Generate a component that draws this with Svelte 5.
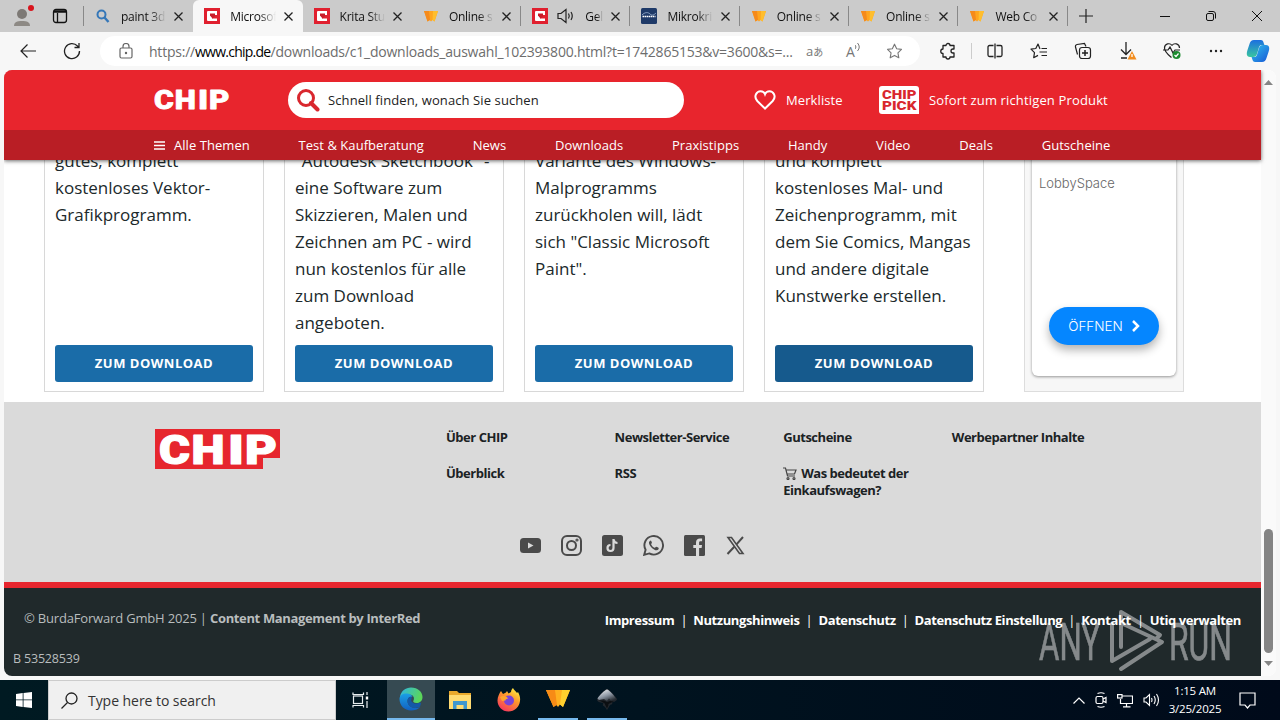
<script>
    const tabs = [
        { title: 'paint 3d', icon: 'search' },
        { title: 'Microsof', icon: 'chip', active: true },
        { title: 'Krita Stu', icon: 'chip', near: true },
        { title: 'Online s', icon: 'w' },
        { title: 'Gel', icon: 'chip', sound: true },
        { title: 'Mikrokri', icon: 'blue' },
        { title: 'Online s', icon: 'w' },
        { title: 'Online s', icon: 'w' },
        { title: 'Web Co', icon: 'w' }
    ];

    const nav = ['Test & Kaufberatung', 'News', 'Downloads', 'Praxistipps', 'Handy', 'Video', 'Deals', 'Gutscheine'];

    const cards = [
        { lines: ['gutes, komplett', 'kostenloses Vektor-', 'Grafikprogramm.'] },
        {
            lines: [
                '"Autodesk Sketchbook" -',
                'eine Software zum',
                'Skizzieren, Malen und',
                'Zeichnen am PC - wird',
                'nun kostenlos für alle',
                'zum Download',
                'angeboten.'
            ]
        },
        {
            lines: [
                'Variante des Windows-',
                'Malprogramms',
                'zurückholen will, lädt',
                'sich "Classic Microsoft',
                'Paint".'
            ]
        },
        {
            lines: [
                'und komplett',
                'kostenloses Mal- und',
                'Zeichenprogramm, mit',
                'dem Sie Comics, Mangas',
                'und andere digitale',
                'Kunstwerke erstellen.'
            ],
            hover: true
        }
    ];

    const footerCols = [
        ['Über CHIP', 'Überblick'],
        ['Newsletter-Service', 'RSS'],
        ['Gutscheine', 'Was bedeutet der Einkaufswagen?'],
        ['Werbepartner Inhalte']
    ];

    const legal = ['Impressum', 'Nutzungshinweis', 'Datenschutz', 'Datenschutz Einstellung', 'Kontakt', 'Utiq verwalten'];
</script>

{#snippet foxIcon()}
    <svg width="16" height="16" viewBox="0 0 16 16">
        <path d="M1 3h14l-3.500 10.500-2-1.500L8 13.500 6.500 12 4.500 13.500z" fill="#ffa51f" />
        <path d="M1 3h5l1 9-2.500 1.500z" fill="#f58a1c" />
        <path d="M10 3h5l-3.500 10.500-2-1.500z" fill="#ffbe2e" />
    </svg>
{/snippet}

<!-- each letter is stretched to its own box of the wordmark -->
{#snippet letters(y)}
    <text x="0" {y} textLength="31" lengthAdjust="spacingAndGlyphs">C</text>
    <text x="32.500" {y} textLength="33" lengthAdjust="spacingAndGlyphs">H</text>
    <text x="69" {y} textLength="16" lengthAdjust="spacingAndGlyphs">I</text>
    <text x="86" {y} textLength="32" lengthAdjust="spacingAndGlyphs">P</text>
{/snippet}

<div class="screen">
    <div class="tabbar">
        <div class="left-tools">
            <svg width="22" height="22" viewBox="0 0 22 22">
                <circle cx="10" cy="9" r="5" fill="#7d7975" />
                <path d="M2 21c0-4 3-5 8-5s8 1 8 5z" fill="#8d8984" />
                <circle cx="19" cy="3" r="3" fill="#d8141c" />
            </svg>
            <svg class="workspace" width="16" height="16" viewBox="0 0 16 16" fill="none" stroke="#111" stroke-width="1.300">
                <rect x="1.500" y="1.500" width="13" height="13" rx="2.500" />
                <path d="M2 3.500h12" stroke-width="2.500" /><path d="M5.500 5v9" />
            </svg>
        </div>
        {#each tabs as tab}
            <div class="tab" class:active={tab.active} class:near={tab.near}>
                {#if tab.icon === 'search'}
                    <svg width="16" height="16" viewBox="0 0 16 16" fill="none" stroke="#3577b8" stroke-width="2">
                        <circle cx="6.500" cy="6.500" r="4" /><path d="M9.500 9.500l4 4.500" stroke-width="2.400" />
                    </svg>
                {:else if tab.icon === 'chip'}
                    <svg width="16" height="16" viewBox="0 0 16 16">
                        <rect width="16" height="16" fill="#e0202f" />
                        <path d="M3 4q0-1 1-1h9v4h-2V6H6v1.500l2 1.500v1.500h5V13H4q-1 0-1-1z" fill="#fff" />
                        <path d="M6 5.500h5V8L8.500 10.500 6 7.500z" fill="#c81a28" />
                    </svg>
                {:else if tab.icon === 'blue'}
                    <svg width="16" height="16" viewBox="0 0 16 16">
                        <rect width="16" height="16" rx="1.500" fill="#1f3a68" />
                        <path d="M1 7c3-3 6-3 8-1s4 1 6-1" stroke="#8ea6c8" fill="none" />
                        <path d="M1.500 8.500h13" stroke="#fff" stroke-width="1.500" stroke-dasharray="1.500 .5" />
                    </svg>
                {:else}
                    {@render foxIcon()}
                {/if}
                {#if tab.sound}
                    <svg class="sound" width="18" height="16" viewBox="0 0 18 16" fill="none" stroke="#222" stroke-width="1.200">
                        <path d="M1 5.500h3L9 1.500v13L4 10.500H1zM11.500 5.500q1.500 2.500 0 5M14 4q2.500 4 0 8" />
                    </svg>
                {/if}
                <span class="title">{tab.title}</span>
                <svg width="9" height="9" viewBox="0 0 9 9" stroke="#222" stroke-width="1.300"><path d="M.5.5l8 8M8.500.5l-8 8" /></svg>
            </div>
        {/each}
        <svg class="plus" width="14" height="14" viewBox="0 0 14 14" stroke="#222" stroke-width="1.200"><path d="M7 0v14M0 7h14" /></svg>
        <div class="window-controls">
            <svg width="10" height="10" viewBox="0 0 10 10" stroke="#111"><path d="M0 5.500h10" /></svg>
            <svg width="10" height="10" viewBox="0 0 10 10" stroke="#111" fill="none">
                <rect x=".5" y="2.500" width="7" height="7" rx="1.500" /><path d="M2.500.5H7a2.500 2.500 0 0 1 2.500 2.500v4.500" />
            </svg>
            <svg width="10" height="10" viewBox="0 0 10 10" stroke="#111"><path d="M0 0l10 10M10 0L0 10" /></svg>
        </div>
    </div>

    <div class="toolbar">
        <svg class="back" width="16" height="14" viewBox="0 0 16 14" fill="none" stroke="#222" stroke-width="1.200"><path d="M16 7H1M7.500.5L1 7l6.500 6.500" /></svg>
        <svg class="reload" width="18" height="18" viewBox="0 0 18 18" fill="none" stroke="#222" stroke-width="1.300">
            <path d="M16.500 9A7.500 7.500 0 1 1 14.500 4L16 5.500M16 1v4.500h-4.500" />
        </svg>
        <div class="address">
            <svg width="14" height="16" viewBox="0 0 14 16" fill="none" stroke="#666" stroke-width="1.200">
                <rect x="1" y="5" width="12" height="10" rx="1.500" /><path d="M4 5V3.500a3 3 0 0 1 6 0V5" /><circle cx="7" cy="10" r=".6" fill="#666" />
            </svg>
            <span class="url">https://<b>www.chip.de</b>/downloads/c1_downloads_auswahl_102393800.html?t=1742865153&v=3600&s=...</span>
            <span class="translate">a<small>あ</small></span>
            <span class="read">A<svg width="6" height="10" viewBox="0 0 6 10" fill="none" stroke="#777"><path d="M0 2q2 2 0 4M2.500 0q3.500 4 0 8" /></svg></span>
            <svg width="17" height="16" viewBox="0 0 20 20" fill="none" stroke="#777" stroke-width="1.400" stroke-linejoin="round">
                <path d="M10 1.500l2.700 5.600 6 .9-4.400 4.300 1.100 6.200-5.400-3-5.400 3 1.100-6.200L1.300 8l6-.9z" />
            </svg>
        </div>
        <svg class="puzzle" width="18" height="18" viewBox="0 0 18 18" fill="none" stroke="#222" stroke-width="1.300" stroke-linejoin="round">
            <path d="M4 3.500h3a2 2 0 0 1 4 0h4V7h-1a2 2 0 0 0 0 4h1v4h-4a2 2 0 0 1-4 0H4v-3.500a2.200 2.200 0 0 1 0-4.500z" />
        </svg>
        <i class="rule"></i>
        <div class="tools">
            <svg width="16" height="16" viewBox="0 0 16 16" fill="none" stroke="#222" stroke-width="1.300">
                <path d="M6.500 2.500h-4a1.500 1.500 0 0 0-1.500 1.500v8a1.500 1.500 0 0 0 1.500 1.500h4M9.500 2.500h4A1.500 1.500 0 0 1 15 4v8a1.500 1.500 0 0 1-1.500 1.500h-4M8 .5v15" />
            </svg>
            <svg width="18" height="16" viewBox="0 0 18 16" fill="none" stroke="#222" stroke-width="1.200" stroke-linejoin="round">
                <path d="M10 6L8 1 5.800 5.500 1 6.200l3.500 3.500-.8 5L8 12.400M11.500 5.500H17M9.500 9H17M11.500 12.500H17" />
            </svg>
            <svg width="18" height="18" viewBox="0 0 18 18" fill="none" stroke="#222" stroke-width="1.200">
                <path d="M3.500 12.500L1.500 5A2 2 0 0 1 3 2.500L10.500 1.500 12 4.500" /><rect x="5.500" y="5.500" width="11" height="11" rx="2.500" /><path d="M11 8v6M8 11h6" stroke-width="1.500" />
            </svg>
            <svg width="18" height="20" viewBox="0 0 18 20" fill="none" stroke="#222" stroke-width="1.300">
                <path d="M7 1v12M2 8.500L7 13.500l5-5M2 17h6" /><path d="M13 10l4.500 8.500h-9z" fill="#f28c1d" stroke="none" /><path d="M13 13v3" stroke="#fff" />
            </svg>
            <svg width="18" height="18" viewBox="0 0 18 18" fill="none" stroke="#222" stroke-width="1.200">
                <path d="M9 3.500C7 .5 1.500 1.500 1.500 6c0 4 4 7 7 9.500M9 3.500c2-3 7.500-2 7.500 2.500M0 8h5l2-3 3 6 2-3h5" /><circle cx="13.500" cy="13" r="4" fill="#1b8a2e" stroke="none" /><path d="M11.500 13l1.500 1.500 2.500-3" stroke="#fff" />
            </svg>
            <svg width="16" height="4" viewBox="0 0 16 4" fill="#222"><circle cx="3" cy="2" r="1.200" /><circle cx="8" cy="2" r="1.200" /><circle cx="13" cy="2" r="1.200" /></svg>
        </div>
        <svg class="copilot" width="24" height="24" viewBox="0 0 24 24">
            <defs>
                <linearGradient id="cpA" x1="0" y1="0" x2="0" y2="1"><stop offset="0" stop-color="#1c6fe0" /><stop offset="1" stop-color="#39c6a0" /></linearGradient>
                <linearGradient id="cpB" x1="0" y1="0" x2="1" y2="1"><stop offset="0" stop-color="#2fc3ee" /><stop offset="1" stop-color="#1856d6" /></linearGradient>
            </defs>
            <path d="M8 1h7c2.500 0 2.500 3 3.500 5h-3c-2 0-2.500 2-3 4l-1.500 5c-.7 2-1.500 3-4 3H4c-4 0-3.500-4-2.500-7l2-6C4.300 2.500 5.500 1 8 1z" fill="url(#cpA)" />
            <path d="M16 23H9c-2.500 0-2.500-3-3.500-5h3c2 0 2.500-2 3-4L13 9c.7-2 1.500-3 4-3h3c4 0 3.500 4 2.500 7l-2 6c-.8 2.500-2 4-4.500 4z" fill="url(#cpB)" />
        </svg>
    </div>

    <div class="viewport">
        <div class="page">
            <header>
                <div class="brand-row">
                    <svg class="wordmark" width="76" height="22" viewBox="0 0 119 34" preserveAspectRatio="none">
                        {@render letters(31)}
                    </svg>
                    <div class="search">
                        <svg width="24" height="24" viewBox="0 0 24 24" fill="none" stroke="#d9272e"><circle cx="10" cy="10" r="7.500" stroke-width="3" /><path d="M15 15l6.500 6.500" stroke-width="4" stroke-linecap="round" /></svg>
                        <span>Schnell finden, wonach Sie suchen</span>
                    </div>
                    <svg class="heart" width="22" height="20" viewBox="0 0 22 20" fill="none" stroke="#fff" stroke-width="2"><path d="M11 18.500L3.300 11C-1 6 3 1.200 6.500 1.200c2 0 3.700 1 4.500 3 .8-2 2.500-3 4.500-3C19 1.200 23 6 18.700 11z" /></svg>
                    <span class="merk">Merkliste</span>
                    <svg class="pick" width="40" height="28" viewBox="0 0 40 28">
                        <path d="M3 0h34a3 3 0 0 1 3 3v25H3a3 3 0 0 1-3-3V3a3 3 0 0 1 3-3z" fill="#fff" />
                        <text x="3" y="12.500" textLength="34.500" lengthAdjust="spacingAndGlyphs" class="pick-text">CHIP</text>
                        <text x="3" y="24" textLength="34.500" lengthAdjust="spacingAndGlyphs" class="pick-text">PICK</text>
                    </svg>
                    <span class="sofort">Sofort zum richtigen Produkt</span>
                </div>
                <nav>
                    <span class="all"><svg width="11" height="9" viewBox="0 0 11 9" stroke="#fff" stroke-width="1.500"><path d="M0 1h11M0 4.500h11M0 8h11" /></svg>Alle Themen</span>
                    {#each nav as item}<span>{item}</span>{/each}
                </nav>
            </header>

            <main>
                {#each cards as card}
                    <article>
                        <p>{#each card.lines as line}<span>{line}</span>{/each}</p>
                        <button class:hover={card.hover}>ZUM DOWNLOAD</button>
                    </article>
                {/each}
                <aside>
                    <div class="ad">
                        <span>LobbySpace</span>
                        <button>ÖFFNEN <svg width="8" height="12" viewBox="0 0 8 12" fill="none" stroke="#fff" stroke-width="2.500"><path d="M1 1l5 5-5 5" /></svg></button>
                    </div>
                </aside>
            </main>

            <footer>
                <div class="links">
                    <svg class="footer-logo wordmark" width="125" height="40" viewBox="0 0 125 40">
                        <path d="M0 0h125v29h-17v11H0z" fill="#e6262e" stroke="none" />
                        <g transform="translate(4 3.500)">{@render letters(31)}</g>
                    </svg>
                    {#each footerCols as col}
                        <div class="col">
                            {#each col as link}
                                <a href="#top">{#if link.startsWith('Was')}<svg width="14" height="13" viewBox="0 0 14 13" fill="none" stroke="#444" stroke-width="1.200"><path d="M0 1h2.500L4.500 9H12M3 3h10l-1.500 4H4" /><circle cx="5" cy="11.500" r="1" /><circle cx="11" cy="11.500" r="1" /></svg>{/if}{link}</a>
                            {/each}
                        </div>
                    {/each}
                </div>
                <div class="social">
                    <svg viewBox="0 0 21 21"><rect y="3" width="21" height="15" rx="3.500" fill="#4a4a4a" /><path d="M8 7.500v6l5.500-3z" fill="#dadada" /></svg>
                    <svg viewBox="0 0 21 21" fill="none" stroke="#4a4a4a" stroke-width="2"><rect x="1" y="1" width="19" height="19" rx="5" /><circle cx="10.500" cy="10.500" r="4.500" /><circle cx="16" cy="5" r=".6" /></svg>
                    <svg viewBox="0 0 21 21"><rect width="21" height="21" rx="2.500" fill="#4a4a4a" /><path d="M11.500 4v9a3 3 0 1 1-3-3M11.500 4.500c.5 2.500 2 3.500 4 3.500" fill="none" stroke="#dadada" stroke-width="2.200" /></svg>
                    <svg viewBox="0 0 21 21"><path d="M1.200 19.800l1.400-5A9.300 9.300 0 1 1 6.200 18.400z" fill="none" stroke="#4a4a4a" stroke-width="1.900" /><path d="M7.500 5.500c-3 1.500-1 5 1.200 7.200s5.500 3.700 6.800 1.500c.7-1.500 0-1.500-2.200-2.500-.8-.2-1 1.200-1.700 1-1.500-.5-3-2-3.500-3.500 0-.6 1-.8.800-1.600-.5-1.400-.7-2.100-1.400-2.100z" fill="#4a4a4a" /></svg>
                    <svg viewBox="0 0 21 21"><rect width="21" height="21" rx="1.500" fill="#4a4a4a" /><path d="M12 21v-8H9.300V9.900H12V7.500C12 4.800 13.600 3.400 16 3.400c1 0 1.900.1 2.100.1v2.800h-1.500c-1.200 0-1.500.6-1.500 1.500v2.100h2.900l-.4 3.100h-2.500v8z" fill="#dadada" /></svg>
                    <svg viewBox="0 0 21 21" fill="none" stroke="#4a4a4a"><path d="M3 2.500h3.500L18 18.500h-3.500z" stroke-width="1.600" /><path d="M18 2L11.500 9.300M9.300 11.700L2.500 19" stroke-width="2" /></svg>
                </div>
            </footer>

            <div class="bottom">
                <div class="copyright">
                    <p>© BurdaForward GmbH 2025 | <b>Content Management by InterRed</b></p>
                    <small>B 53528539</small>
                </div>
                <div class="legal">
                    {#each legal as item}<a href="#top">{item}</a>{/each}
                </div>
            </div>
        </div>
        <div class="scrollbar">
            <svg width="9" height="6" viewBox="0 0 9 6"><path d="M0 6L4.500 1 9 6z" fill="#858585" /></svg>
            <i></i>
            <svg width="9" height="6" viewBox="0 0 9 6"><path d="M0 0l4.500 5L9 0z" fill="#858585" /></svg>
        </div>
    </div>

    <div class="taskbar">
        <div class="start"><svg width="16" height="16" viewBox="0 0 16 16" fill="#fff"><path d="M0 2l6.700-1v6.500H0zM7.500.9L16 0v7.500H7.500zM0 8.300h6.700V15L0 14zM7.500 8.300H16V16l-8.500-1z" /></svg></div>
        <div class="find">
            <svg width="17" height="17" viewBox="0 0 17 17" fill="none" stroke="#222" stroke-width="1.300"><circle cx="10.500" cy="6.500" r="5.500" /><path d="M6.500 10.500L.5 16.500" /></svg>
            Type here to search
        </div>
        <div class="app view">
            <svg width="17" height="16" viewBox="0 0 17 16" fill="none" stroke="#e8eef0" stroke-width="1.200"><rect x="1.500" y="4" width="9" height="7.500" /><path d="M1 .5v2h10.500v-2M1 15.500v-2h10.500v2M15 0v3M15 9v7" /><path d="M13.800 4.500h2.400v3h-2.400z" fill="#fff" stroke="none" /></svg>
        </div>
        <div class="app on">
            <svg width="24" height="24" viewBox="0 0 24 24">
                <defs>
                    <linearGradient id="edA" x1="0" y1="0" x2="1" y2=".3"><stop offset="0" stop-color="#2db5e8" /><stop offset="1" stop-color="#5bd65a" /></linearGradient>
                    <linearGradient id="edB" x1="0" y1="0" x2="0" y2="1"><stop offset="0" stop-color="#1aa0e6" /><stop offset="1" stop-color="#1360c0" /></linearGradient>
                </defs>
                <path d="M1 10C2 4 6.500.5 12 .5 19 .5 23.500 5 23.500 10c0 4-3 6-6 6-2.500 0-4-1-3-2.500 1.500-3-.5-6-4.500-6C6 7.500 2 9 1 12z" fill="url(#edA)" />
                <path d="M.5 12c0-4 4-6 8-5.500 3 .3 4.500 2 5 3.500-3-1-5 1-5 4 0 4 3.500 7 8 7 2 0 3.500-.5 5-1.500C19 22.500 15.500 23.500 12 23.500 5.500 23.500.5 18.500.5 12z" fill="url(#edB)" />
                <path d="M8.500 14c0-2.500 1.500-4.500 4-4.300.8 1.500-.8 3-.2 4.300 1 2.500 5 3.500 9 1.500l.7 1-1 3C17 22.500 8.500 21 8.500 14z" fill="#1459a8" />
            </svg>
        </div>
        <div class="app">
            <svg width="22" height="18" viewBox="0 0 22 18"><path d="M0 0h8l2 2h12v16H0z" fill="#e9a92c" /><path d="M0 4h22v14H0z" fill="#ffdb72" /><path d="M4 18v-8h14v8h-3.500v-4h-7v4z" fill="#3f97cf" /></svg>
        </div>
        <div class="app">
            <svg width="24" height="24" viewBox="0 0 24 24">
                <defs><linearGradient id="ff" x1=".8" y1="0" x2=".2" y2="1"><stop offset="0" stop-color="#fff044" /><stop offset=".4" stop-color="#ff9a2a" /><stop offset="1" stop-color="#f52f62" /></linearGradient></defs>
                <path d="M4 3l2 3 3-1.500L10 3l1.500 2.500L14 4c0-2 1-3 2-4 .5 2 3 3 4 5l1-1c1.500 3 2.500 5.500 2 9-.7 6-5.500 10.500-11.500 10.500C5 23.500.5 18.500.5 12.500.5 9 2.500 5 4 3z" fill="url(#ff)" />
                <circle cx="12" cy="12.500" r="5" fill="#7a43d6" /><path d="M3 9c3-2 7-1 8 1.500-2 .5-2.500 1-2.500 2L5 13z" fill="#ffa52c" />
            </svg>
        </div>
        <div class="app run">
            <svg width="24" height="18" viewBox="0 0 24 18"><path d="M0 0h24l-7 17-3-2.500-2 2.500-2-2.500L7.500 17z" fill="#ffb01f" /><path d="M0 0h9l2 15-3.500 2z" fill="#f78b16" /><path d="M16 0h8l-7 17-3-2.500z" fill="#ffd02e" /></svg>
        </div>
        <div class="app run">
            <svg width="20" height="21" viewBox="0 0 20 21">
                <defs><linearGradient id="ink" x1="0" y1="0" x2=".6" y2="1"><stop offset="0" stop-color="#fff" /><stop offset=".6" stop-color="#8d97a3" /><stop offset="1" stop-color="#30363d" /></linearGradient></defs>
                <path d="M10 0c2 0 9 8 10 10 0 2-3 3-5 3.500 1 1.500-.5 2-2 2.500L10 21l-2-3-2-1.500c-1-1 1-1.500 0-2.500-3-.5-6-1-6-3.500C1 8 8 0 10 0z" fill="#23282e" />
                <path d="M10 .5c2 0 8.500 7.500 9 9.500l-5 1.500-2-2-2 2.500-3-2-5 1-1.500-1.500C1.500 7.500 8 .5 10 .5z" fill="url(#ink)" />
                <path d="M2 11.500c3 1.500 7 3 6 4l2 4 1.500-3.500c-1-1 2-2 5.500-3.500l-4-.5-3 1-3-1.500z" fill="#0c0f12" />
            </svg>
        </div>
        <div class="tray">
            <svg width="12" height="7" viewBox="0 0 12 7" fill="none" stroke="#fff" stroke-width="1.200"><path d="M.5 6.500L6 1l5.500 5.500" /></svg>
            <svg width="12" height="16" viewBox="0 0 12 16" fill="none" stroke="#fff" stroke-width="1.200"><rect x="1" y="4.500" width="7" height="7" rx="1.500" /><path d="M8 7l3-1.500v5L8 9M2.500 1.500q3.500-1.500 7 0M2.500 14.500q3.500 1.500 7 0" /></svg>
            <svg width="16" height="15" viewBox="0 0 16 15" fill="none" stroke="#fff" stroke-width="1.200"><path d="M5 3h10.500v7.500H3.500V6M9.500 10.500v3M6 13.800h7.500" /><rect x=".6" y="1.600" width="4.400" height="3.400" /></svg>
            <svg width="17" height="14" viewBox="0 0 17 14" fill="none" stroke="#fff" stroke-width="1.100"><path d="M1 5h2l3.500-3.500v11L3 9H1zM8.500 5q1 2 0 4M11 3q2.500 4 0 8M13.500 1q4 6 0 12" /></svg>
            <div class="clock"><span>1:15 AM</span><span>3/25/2025</span></div>
            <svg width="17" height="17" viewBox="0 0 17 17" fill="none" stroke="#fff" stroke-width="1.200"><path d="M1 1h15v12h-5l-2.500 3L6 13H1z" /></svg>
        </div>
    </div>

    <svg class="watermark" width="196" height="66" viewBox="0 0 196 66">
        <text x="2" y="51.500" textLength="61" lengthAdjust="spacingAndGlyphs">ANY</text>
        <text x="132" y="51.500" textLength="63" lengthAdjust="spacingAndGlyphs">RUN</text>
        <g fill="none" stroke="#fff" stroke-width="4" stroke-linejoin="round" stroke-linecap="round">
            <path d="M75 16v37l38-22M84 39V4l39 23-3 3M84 15l41 19-41 27" />
        </g>
    </svg>
</div>

<style>
:global(body) {
    margin: 0;
}

.screen {
    position: relative;
    width: 1280px;
    height: 720px;
    overflow: hidden;
    display: flex;
    flex-direction: column;
    background: #f7f7f7;
    font-family: "Open Sans", "Noto Sans", sans-serif;
}

.screen * {
    box-sizing: border-box;
}

svg {
    flex: none;
}

/* browser tabs */
.tabbar {
    flex: none;
    height: 32px;
    display: flex;
    align-items: center;
    background: #cbcbcb;
}

.left-tools {
    width: 84px;
    height: 20px;
    display: flex;
    align-items: center;
    padding-left: 12px;
    border-right: 1px solid #888;
}

.workspace {
    margin-left: 18px;
}

.tab {
    flex: none;
    width: 109.300px;
    height: 20px;
    display: flex;
    align-items: center;
    padding: 0 9px 0 11px;
    border-right: 1px solid #888;
    font-size: 12px;
    letter-spacing: -.25px;
    color: #111;
}

.tab.active {
    height: 32px;
    padding-right: 10px;
    background: #f7f7f7;
    border-radius: 6px 6px 0 0;
    border: none;
}

.tab:has(+ .active), .tab.near {
    border-color: transparent;
}

.title {
    flex: 1;
    margin-left: 10px;
    margin-right: 8px;
    white-space: nowrap;
    overflow: hidden;
    mask-image: linear-gradient(90deg, #000 65%, transparent);
}

.sound {
    margin-left: 9px;
}

.plus {
    margin-left: 11px;
}

.window-controls {
    display: flex;
    gap: 36px;
    margin-left: auto;
    padding-right: 18px;
}

/* address row */
.toolbar {
    flex: none;
    height: 38px;
    display: flex;
    align-items: center;
}

.back {
    margin-left: 20px;
}

.reload {
    margin-left: 27px;
}

.address {
    width: 820px;
    height: 30px;
    display: flex;
    align-items: center;
    margin-left: 19px;
    padding-left: 19px;
    border-radius: 15px;
    background: #fff;
}

.url {
    width: 650px;
    margin-left: 16px;
    font-size: 14px;
    letter-spacing: -.22px;
    white-space: nowrap;
    color: #6d6d6d;
}

.url b {
    font-weight: 400;
    letter-spacing: -.75px;
    color: #000;
}

.translate {
    width: 40px;
    margin-left: 7px;
    font: 13px/16px "Open Sans", "Noto Sans CJK JP", sans-serif;
    color: #777;
}

.translate small {
    font-size: 10px;
}

.read {
    width: 40px;
    font-size: 14px;
    color: #777;
}

.read svg {
    margin-bottom: 4px;
}

.puzzle {
    margin-left: 19px;
}

.rule {
    width: 1px;
    height: 16px;
    margin: 0 15px 0 14px;
    background: #ccc;
}

.tools {
    display: flex;
    align-items: center;
    gap: 26.500px;
}

.copilot {
    margin-left: 22px;
}

/* page */
.viewport {
    flex: none;
    width: 1272px;
    height: 606px;
    display: flex;
    margin-left: 4px;
    border-radius: 8px;
    overflow: hidden;
    background: #fff;
}

.page {
    flex: none;
    width: 1257px;
    height: 606px;
    display: flex;
    flex-direction: column;
}

header {
    position: relative;
    z-index: 1;
    flex: none;
    color: #fff;
    font-size: 13px;
    background: #e8252d;
    box-shadow: 0 1px 4px rgba(0, 0, 0, .6);
}

.brand-row {
    height: 60px;
    display: flex;
    align-items: center;
    padding-left: 149.500px;
    white-space: nowrap;
}

.wordmark {
    font-family: Roboto, sans-serif;
    font-size: 41px;
    font-weight: 900;
    fill: #fff;
    stroke: #fff;
    stroke-width: 1.200;
    stroke-linejoin: round;
}

.search {
    width: 396px;
    height: 36px;
    display: flex;
    align-items: center;
    margin-left: 58.500px;
    padding-left: 8px;
    border-radius: 18px;
    background: #fff;
    color: #222;
}

.search span {
    margin-left: 8px;
    letter-spacing: .1px;
}

.heart {
    margin-left: 70px;
}

.merk {
    width: 57px;
    margin-left: 10px;
    letter-spacing: .1px;
}

.pick {
    margin-left: 36px;
}

.pick-text {
    font: 900 13px Roboto, sans-serif;
    fill: #d9272e;
}

.sofort {
    margin-left: 10px;
    letter-spacing: .15px;
}

nav {
    height: 30px;
    display: flex;
    align-items: center;
    justify-content: space-between;
    padding: 0 150.500px 0 150px;
    letter-spacing: .05px;
    background: #b91e25;
}

.all svg {
    margin-right: 9px;
}

main {
    flex: none;
    height: 242px;
    display: flex;
    align-items: flex-end;
    gap: 20px;
    padding: 0 0 10px 40px;
    overflow: hidden;
}

article {
    flex: none;
    width: 220px;
    height: 260px;
    display: flex;
    flex-direction: column;
    justify-content: space-between;
    padding: 14px 10px 9px;
    border: 1px solid #d8d8d8;
    color: #20292b;
}

article p {
    margin: 0;
    font-size: 17px;
    line-height: 27px;
    white-space: nowrap;
}

article p span {
    display: block;
}

button {
    border: none;
    color: #fff;
    font-family: inherit;
}

article button {
    height: 37px;
    padding-bottom: 3px;
    border-radius: 3px;
    background: #1a6ca8;
    font-size: 13px;
    font-weight: 700;
    letter-spacing: .5px;
}

article button.hover {
    background: #165a8d;
}

aside {
    flex: none;
    width: 160px;
    height: 260px;
    margin-left: 20px;
    padding: 0 7px 15px;
    border: 1px solid #ddd;
    background: #f7f7f7;
}

.ad {
    height: 100%;
    display: flex;
    flex-direction: column;
    justify-content: space-between;
    align-items: center;
    padding: 42px 7px 31px;
    border-radius: 0 0 6px 6px;
    background: #fff;
    box-shadow: 0 1px 3px rgba(0, 0, 0, .4);
    font-family: Inter, sans-serif;
}

.ad span {
    align-self: flex-start;
    font-size: 13px;
    font-weight: 300;
    color: #666;
}

.ad button {
    width: 110px;
    height: 38px;
    display: flex;
    align-items: center;
    justify-content: center;
    gap: 9px;
    border-radius: 19px;
    background: #0586ff;
    box-shadow: 0 5px 10px rgba(0, 0, 0, .3);
    font-size: 13.500px;
    font-weight: 300;
}

/* footer */
footer {
    flex: none;
    height: 186px;
    border-bottom: 6px solid #e6262e;
    background: #dadada;
}

.links {
    height: 133px;
    display: flex;
    padding: 27px 0 0 151px;
}

.footer-logo {
    margin-right: 166px;
}

.col {
    width: 168.600px;
    display: flex;
    flex-direction: column;
    gap: 19px;
}

.col a {
    width: 145px;
    color: #1b2224;
    font-size: 13px;
    font-weight: 700;
    line-height: 17px;
    letter-spacing: -.47px;
    text-decoration: none;
}

.col svg {
    margin-right: 4px;
    vertical-align: -2px;
}

.social {
    display: flex;
    gap: 20px;
    padding-left: 516px;
}

.social svg {
    width: 21px;
    height: 21px;
}

.bottom {
    flex: 1;
    display: flex;
    justify-content: space-between;
    padding: 21px 20px 0 9px;
    background: #20292b;
    color: #b9bdbe;
    font-size: 13px;
    line-height: 18px;
    letter-spacing: -.18px;
    white-space: nowrap;
}

.copyright p {
    margin: 0 0 22px 11px;
}

.copyright b {
    letter-spacing: -.36px;
}

.copyright small {
    font-size: 12.500px;
}

.legal {
    padding-top: 2px;
}

.legal a {
    color: #fff;
    font-weight: 700;
    letter-spacing: -.4px;
    text-decoration: none;
}

.legal a + a::before {
    content: "|";
    margin: 0 6.100px;
    font-weight: 400;
}

.scrollbar {
    flex: 1;
    display: flex;
    flex-direction: column;
    align-items: center;
    padding: 9px 0;
    background: #fafafa;
}

.scrollbar i {
    width: 9px;
    height: 124px;
    margin-top: auto;
    margin-bottom: 8px;
    border-radius: 5px;
    background: #858585;
}

/* taskbar */
.taskbar {
    height: 40px;
    display: flex;
    margin-top: 4px;
    background: linear-gradient(90deg, #001a22, #00131f 50%, #000a1a);
    color: #fff;
}

.start, .app {
    width: 48px;
    display: flex;
    align-items: center;
    justify-content: center;
}

.find {
    width: 288px;
    display: flex;
    align-items: center;
    gap: 10px;
    padding-left: 12px;
    border: 1px solid #ccc;
    background: #f0f0f0;
    color: #333;
    font-size: 14px;
    letter-spacing: -.05px;
}

.app + .app {
    margin-left: 1px;
}

.app.view + .app {
    margin-left: 3px;
}

.app.on {
    background: #364a52;
    border-bottom: 2px solid #76b9ed;
}

.app.run {
    width: 40px;
    margin: 0 4px 0 5px;
    border-bottom: 2px solid #76b9ed;
}

.tray {
    display: flex;
    align-items: center;
    margin-left: auto;
    padding-right: 24px;
    gap: 10px;
}

.clock {
    width: 68px;
    display: flex;
    flex-direction: column;
    align-items: center;
    margin-left: -9px;
    font-size: 11.500px;
    line-height: 18px;
    letter-spacing: -.2px;
    white-space: nowrap;
}

.watermark {
    position: absolute;
    left: 1037px;
    top: 608px;
    opacity: .45;
}

.watermark text {
    font: 400 51px Roboto, sans-serif;
    fill: #fff;
    stroke: #fff;
    stroke-width: .6;
}
</style>
